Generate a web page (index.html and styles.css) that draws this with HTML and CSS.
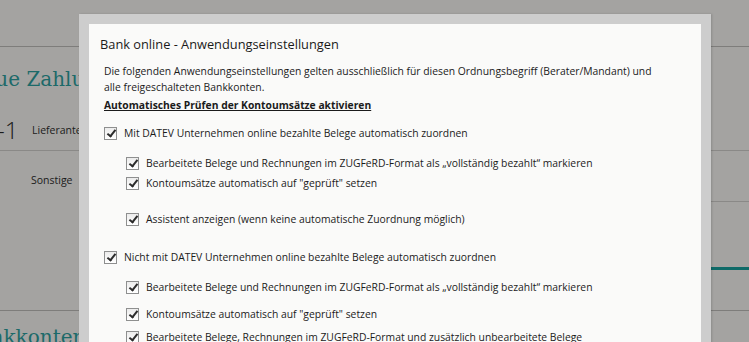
FILE: index.html
```html
<!DOCTYPE html>
<html lang="de">
<head>
    <meta charset="UTF-8">
    <title>Bank online - Anwendungseinstellungen</title>
    <link rel="stylesheet" href="styles.css">
</head>
<body>
    <div class="page">
        <div class="topbar"></div>
        <h2 class="page-title">Neue Zahlung</h2>
        <div class="pay-row">
            <span class="pay-num">-1</span>
            <span class="pay-label">Lieferanten</span>
        </div>
        <div class="pay-row second">
            <span class="pay-label">Sonstige</span>
        </div>
        <div class="section-end"></div>
        <div class="section-foot"></div>
        <h2 class="page-title accounts">Bankkonten</h2>
    </div>

    <div class="dialog">
        <div class="dialog-body">
            <h1 class="dialog-title">Bank online - Anwendungseinstellungen</h1>
            <div class="dialog-content">
                <p class="intro">Die folgenden Anwendungseinstellungen gelten ausschließlich für diesen Ordnungsbegriff (Berater/Mandant) und alle freigeschalteten Bankkonten.</p>
                <h3 class="group-title">Automatisches Prüfen der Kontoumsätze aktivieren</h3>

                <label class="option first"><span class="check"></span>Mit DATEV Unternehmen online bezahlte Belege automatisch zuordnen</label>
                <label class="option sub gap-m"><span class="check"></span>Bearbeitete Belege und Rechnungen im ZUGFeRD-Format als „vollständig bezahlt“ markieren</label>
                <label class="option sub"><span class="check"></span>Kontoumsätze automatisch auf "geprüft" setzen</label>
                <label class="option sub gap-l"><span class="check"></span>Assistent anzeigen (wenn keine automatische Zuordnung möglich)</label>

                <label class="option gap-xl"><span class="check"></span>Nicht mit DATEV Unternehmen online bezahlte Belege automatisch zuordnen</label>
                <label class="option sub gap-m"><span class="check"></span>Bearbeitete Belege und Rechnungen im ZUGFeRD-Format als „vollständig bezahlt“ markieren</label>
                <label class="option sub gap-s"><span class="check"></span>Kontoumsätze automatisch auf "geprüft" setzen</label>
                <label class="option sub gap-xs"><span class="check"></span>Bearbeitete Belege, Rechnungen im ZUGFeRD-Format und zusätzlich unbearbeitete Belege</label>
            </div>
        </div>
    </div>
</body>
</html>
```

FILE: styles.css
```css
body {
    margin: 0;
    padding: 0;
    background: #a4a3a1;
    font-family: "Open Sans", sans-serif;
    color: #1b1b1b;
    overflow: hidden;
    height: 342px;
}

.page {
    height: 342px;
}

.topbar {
    height: 46px;
    border-bottom: 1px solid #7e7d7b;
}

.page-title {
    font-family: "DejaVu Serif", serif;
    font-weight: normal;
    font-size: 20px;
    color: #1c6a69;
    margin: 18px 0 0 -34px;
    line-height: 28px;
    white-space: nowrap;
}

.pay-row {
    display: flex;
    align-items: center;
    height: 41px;
    margin-top: 16px;
    border-bottom: 1px solid #8a8987;
}

.pay-row.second {
    height: 50px;
    padding-top: 8px;
    box-sizing: border-box;
    margin-top: 0;
    border-bottom: none;
}

.pay-num {
    font-weight: 300;
    font-size: 24px;
    margin-left: -3px;
    width: 35px;
}

.pay-label {
    font-size: 10.5px;
}

.pay-row.second .pay-label {
    margin-left: 31px;
}

.section-end {
    height: 65px;
    margin-left: 140px;
    border-top: 1px solid #8a8987;
    border-bottom: 3px solid #0f6a68;
}

.section-foot {
    height: 40px;
    border-bottom: 1px solid #7e7d7b;
}

.page-title.accounts {
    margin: 12px 0 0 -36px;
}

.dialog {
    position: absolute;
    left: 79px;
    top: 14px;
    width: 612px;
    height: 340px;
    padding: 10px 10px 0;
    background: #cdcdcd;
    box-shadow: 1px 0 2px rgba(0, 0, 0, 0.15);
}

.dialog-body {
    background: #fafaf9;
    height: 100%;
    padding: 10px 11px;
    box-sizing: border-box;
}

.dialog-title {
    font-size: 12.8px;
    font-weight: normal;
    line-height: 20px;
    margin: 0;
    color: #1a1a1a;
}

.dialog-content {
    padding-left: 4px;
    font-size: 10.35px;
}

.intro {
    margin: 9px 0 0;
    line-height: 16px;
    width: 556px;
}

.group-title {
    margin: 2px 0 0;
    font-size: 10.3px;
    font-weight: bold;
    line-height: 16px;
    text-decoration: underline;
}

.option {
    display: flex;
    align-items: center;
    height: 20px;
    white-space: nowrap;
}

.option.first {
    margin-top: 10px;
}

.option.sub {
    padding-left: 22px;
}

.option.gap-xs { margin-top: 3px; }
.option.gap-s { margin-top: 7px; }
.option.gap-m { margin-top: 10px; }
.option.gap-l { margin-top: 16px; }
.option.gap-xl { margin-top: 18px; }

.check {
    width: 11px;
    height: 11px;
    border: 1px solid #8e8f8f;
    background: linear-gradient(#ececec, #ffffff);
    margin-right: 7px;
    position: relative;
    flex-shrink: 0;
}

.check::after {
    content: "";
    position: absolute;
    left: 4px;
    top: 0;
    width: 3px;
    height: 7px;
    border: solid #2b2b2b;
    border-width: 0 2px 2px 0;
    transform: rotate(38deg);
}
```
